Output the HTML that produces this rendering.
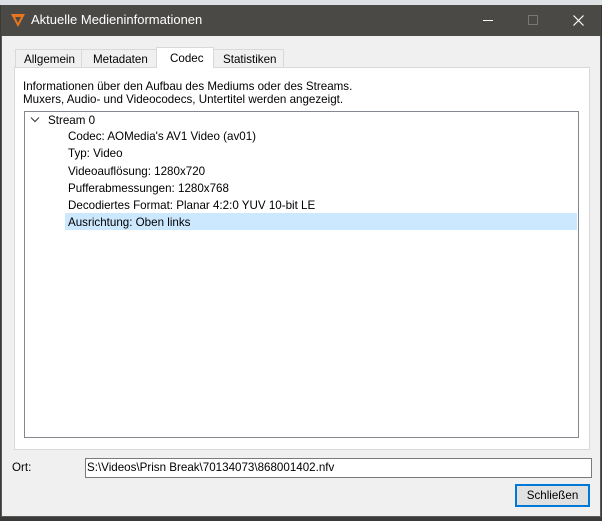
<!DOCTYPE html>
<html><head><style>
body{margin:0;width:602px;height:521px;background:#3a3a38;position:relative;overflow:hidden;font-family:"Liberation Sans",sans-serif;font-size:11.6px;color:#000}
div{position:absolute;box-sizing:border-box}
.t{white-space:nowrap}
</style></head><body>
<div style="left:0;top:0;width:602px;height:5px;background:#dde1e4"></div>
<div style="left:1px;top:5px;width:600px;height:512px;background:#f0f0f0;border:1px solid #5a5a5a"></div>
<div style="left:1px;top:5px;width:600px;height:31px;background:#4b4946"></div>
<svg style="position:absolute;left:10px;top:12px" width="16" height="16" viewBox="0 0 16 16"><path d="M1 2 L15 2 L8 15 Z" fill="#e8761f"/><path d="M5 5 L11 5 L8 11 Z" fill="#4b4946"/></svg>
<div class="t" style="left:31px;top:12px;color:#fff;font-size:13px">Aktuelle Medieninformationen</div>
<div style="left:483px;top:20px;width:10px;height:1px;background:#fff"></div>
<div style="left:528px;top:15px;width:10px;height:10px;border:1px solid #777"></div>
<svg style="position:absolute;left:573px;top:15px" width="11" height="11"><path d="M0.5 0.5L10.5 10.5M10.5 0.5L0.5 10.5" stroke="#fff" stroke-width="1.2"/></svg>
<div style="left:14px;top:67px;width:576px;height:383px;background:#fff;border:1px solid #d9d9d9"></div>
<div class="t" style="left:15px;top:49px;width:67px;height:19px;border:1px solid #d9d9d9;background:#f0f0f0;padding:3px 0 0 8px">Allgemein</div>
<div class="t" style="left:81px;top:49px;width:76px;height:19px;border:1px solid #d9d9d9;background:#f0f0f0;padding:3px 0 0 11px">Metadaten</div>
<div class="t" style="left:156px;top:47px;width:58px;height:21px;border:1px solid #d9d9d9;border-bottom:none;background:#fff;padding:4px 0 0 13px">Codec</div>
<div class="t" style="left:213px;top:49px;width:71px;height:19px;border:1px solid #d9d9d9;background:#f0f0f0;padding:3px 0 0 9px">Statistiken</div>
<div class="t" style="left:23px;top:80px;line-height:13px">Informationen über den Aufbau des Mediums oder des Streams.<br>Muxers, Audio- und Videocodecs, Untertitel werden angezeigt.</div>
<div style="left:24px;top:111px;width:555px;height:327px;border:1px solid #828790;background:#fff"></div>
<div style="left:65px;top:213px;width:512px;height:17px;background:#cce8ff"></div>
<svg style="position:absolute;left:30px;top:116px" width="10" height="8"><path d="M1 1.5L5 5.5L9 1.5" stroke="#444" fill="none" stroke-width="1.2"/></svg>
<div class="t" style="left:48px;top:112px;line-height:17px">Stream 0</div>
<div class="t" style="left:68px;top:128px;line-height:17.3px">Codec: AOMedia's AV1 Video (av01)<br>Typ: Video<br>Videoauflösung: 1280x720<br>Pufferabmessungen: 1280x768<br>Decodiertes Format: Planar 4:2:0 YUV 10-bit LE<br>Ausrichtung: Oben links</div>
<div class="t" style="left:12px;top:461px">Ort:</div>
<div class="t" style="left:85px;top:458px;width:507px;height:20px;border:1px solid #7a7a7a;background:#fff;padding:2px 0 0 1px">S:\Videos\Prisn Break\70134073\868001402.nfv</div>
<div class="t" style="left:515px;top:484px;width:75px;height:23px;border:2px solid #0078d7;background:#e1e1e1;text-align:center;padding-top:3px">Schließen</div>
</body></html>
